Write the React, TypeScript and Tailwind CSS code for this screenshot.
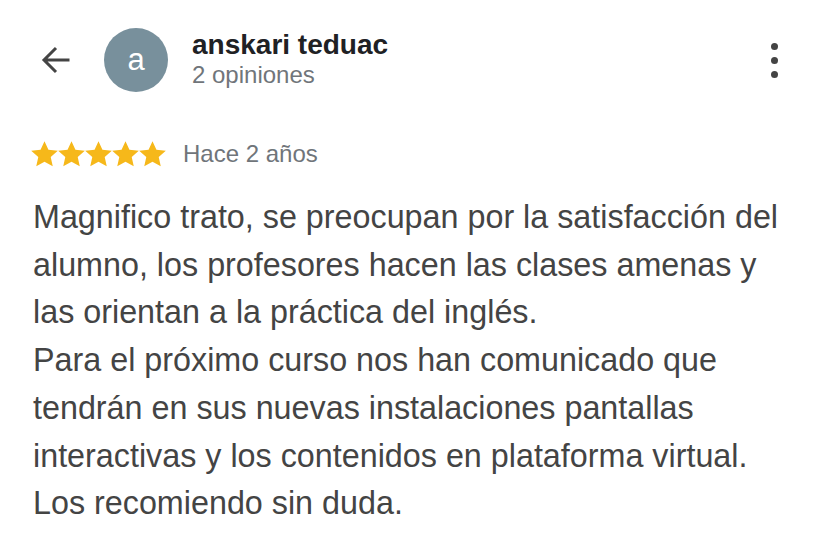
const lines = [
  "Magnifico trato, se preocupan por la satisfacción del",
  "alumno, los profesores hacen las clases amenas y",
  "las orientan a la práctica del inglés.",
  "Para el próximo curso nos han comunicado que",
  "tendrán en sus nuevas instalaciones pantallas",
  "interactivas y los contenidos en plataforma virtual.",
  "Los recomiendo sin duda.",
];

function Star() {
  return (
    <svg width="27" height="26" viewBox="1.5 1.5 21 20.5" fill="#f6b81a">
      <path d="M12 1.6l3.1 6.8 7.4.8-5.6 5 1.6 7.3L12 17.8l-6.5 3.7 1.6-7.3-5.6-5 7.4-.8z" />
    </svg>
  );
}

export default function App() {
  return (
    <div className="w-[828px] h-[547px] bg-white overflow-hidden" style={{ fontFamily: '"Liberation Sans", Arial, sans-serif' }}>
      <div className="flex items-center h-[64px] mt-[28px] pl-[38px] pr-[50px]">
        <svg width="36" height="36" viewBox="0 0 24 24" fill="none" stroke="#444" strokeWidth="2">
          <path d="M21 12H3.5M12 4l-8 8 8 8" />
        </svg>
        <div className="ml-[30px] w-[64px] h-[64px] rounded-full bg-[#78909c] flex items-center justify-center text-white text-[31px]">
          a
        </div>
        <div className="ml-[24px] flex flex-col">
          <div className="text-[28px] font-bold text-[#202124] leading-[30px]">anskari teduac</div>
          <div className="text-[24px] text-[#70757a] leading-[30px]">2 opiniones</div>
        </div>
        <div className="ml-auto flex flex-col gap-[7px]">
          <span className="w-[7px] h-[7px] rounded-full bg-[#444]" />
          <span className="w-[7px] h-[7px] rounded-full bg-[#444]" />
          <span className="w-[7px] h-[7px] rounded-full bg-[#444]" />
        </div>
      </div>
      <div className="flex items-center mt-[44px] pl-[31px]">
        <div className="flex">
          <Star /><Star /><Star /><Star /><Star />
        </div>
        <span className="ml-[17px] text-[24px] text-[#70757a]">Hace 2 años</span>
      </div>
      <div className="mt-[22px] pl-[33px] text-[32.3px] leading-[47.7px] text-[#444]">
        {lines.map((l, i) => (
          <p key={i} className="whitespace-nowrap">{l}</p>
        ))}
      </div>
    </div>
  );
}
